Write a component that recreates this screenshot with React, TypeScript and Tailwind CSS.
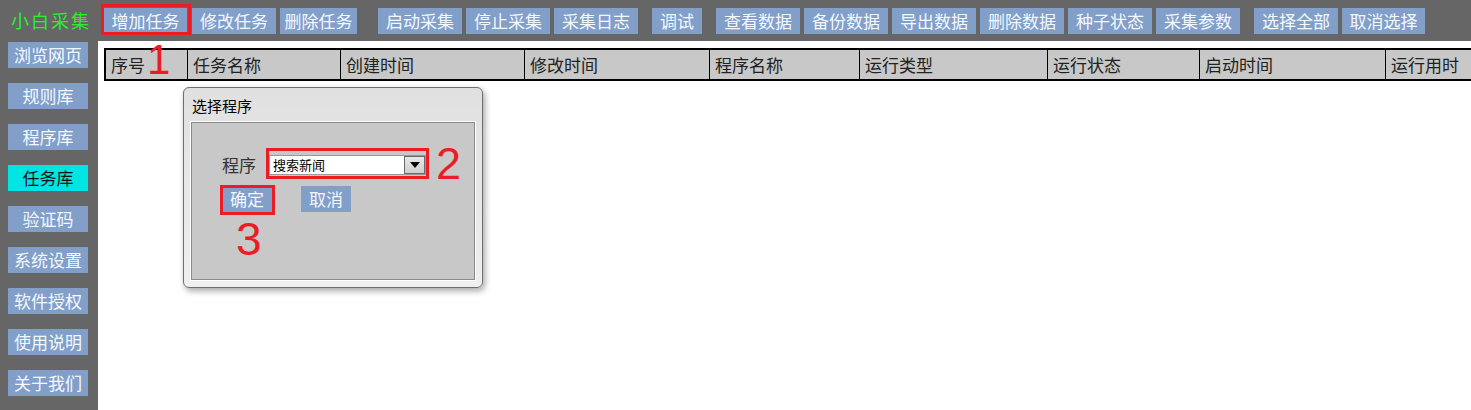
import React from 'react';

const topButtons = [
  { label: '增加任务', cls: 'w-[83px] ml-0' },
  { label: '修改任务', cls: 'w-[84px] ml-[5px]' },
  { label: '删除任务', cls: 'w-[77px] ml-[4px]' },
  { label: '启动采集', cls: 'w-[84px] ml-[21px]' },
  { label: '停止采集', cls: 'w-[84px] ml-[4px]' },
  { label: '采集日志', cls: 'w-[84px] ml-[4px]' },
  { label: '调试', cls: 'w-[50px] ml-[14px]' },
  { label: '查看数据', cls: 'w-[84px] ml-[14px]' },
  { label: '备份数据', cls: 'w-[84px] ml-[4px]' },
  { label: '导出数据', cls: 'w-[84px] ml-[4px]' },
  { label: '删除数据', cls: 'w-[84px] ml-[4px]' },
  { label: '种子状态', cls: 'w-[84px] ml-[4px]' },
  { label: '采集参数', cls: 'w-[84px] ml-[4px]' },
  { label: '选择全部', cls: 'w-[84px] ml-[14px]' },
  { label: '取消选择', cls: 'w-[83px] ml-[4px]' },
];

const sideItems = ['浏览网页', '规则库', '程序库', '任务库', '验证码', '系统设置', '软件授权', '使用说明', '关于我们'];

const columns = [
  { label: '序号', cls: 'w-[82px]' },
  { label: '任务名称', cls: 'w-[153px]' },
  { label: '创建时间', cls: 'w-[184px]' },
  { label: '修改时间', cls: 'w-[185px]' },
  { label: '程序名称', cls: 'w-[150px]' },
  { label: '运行类型', cls: 'w-[188px]' },
  { label: '运行状态', cls: 'w-[152px]' },
  { label: '启动时间', cls: 'w-[186px]' },
  { label: '运行用时', cls: 'w-[200px]' },
];

const Mark: React.FC<{ n: string; cls: string }> = ({ n, cls }) => (
  <span
    className={
      "absolute z-20 leading-none text-[#ed1c24] font-['Liberation_Sans',Arial,sans-serif] " + cls
    }
  >
    {n}
  </span>
);

export default function App() {
  return (
    <div className="relative w-[1471px] h-[410px] overflow-hidden bg-[#666666] flex flex-col font-['Noto_Sans_CJK_SC','Noto_Sans',sans-serif]">
      {/* top toolbar */}
      <div className="flex h-[41px] shrink-0">
        <div className="w-[98px] shrink-0 pl-[11px] pt-[7px] text-[18px] leading-[26px] tracking-[2px] text-[#2aee2a]">
          小白采集
        </div>
        <div className="flex pt-[8px] pl-[6px]">
          {topButtons.map((b, i) => (
            <div
              key={b.label}
              className={
                'relative h-[26px] shrink-0 bg-[#819fc9] text-[17px] leading-[26px] text-center text-[#f4f8ff] ' + b.cls
              }
            >
              {b.label}
              {i === 0 && (
                <div className="absolute left-[-3px] right-[-4px] top-[-4px] bottom-[-1px] border-[3px] border-[#ed1c24]" />
              )}
            </div>
          ))}
        </div>
      </div>

      <div className="flex flex-1">
        {/* left menu */}
        <div className="w-[98px] shrink-0 flex flex-col gap-[15px] pt-[1px] pl-[8px]">
          {sideItems.map((s) => (
            <div
              key={s}
              className={
                s === '任务库'
                  ? 'w-[80px] h-[26px] bg-[#00e4e4] text-[#111] text-[17px] leading-[26px] text-center'
                  : 'w-[80px] h-[26px] bg-[#819fc9] text-[#f4f8ff] text-[17px] leading-[26px] text-center'
              }
            >
              {s}
            </div>
          ))}
        </div>

        {/* content */}
        <div className="flex-1 bg-white pl-[6px] pt-[7px] overflow-hidden">
          <div className="flex w-max h-[33px] bg-[#c8c8c8] border-y-2 border-l-2 border-black">
            {columns.map((c) => (
              <div
                key={c.label}
                className={'flex items-center pl-[5px] border-r border-black text-[17px] text-[#222] ' + c.cls}
              >
                {c.label}
              </div>
            ))}
          </div>
        </div>
      </div>

      {/* dialog */}
      <div className="absolute left-[183px] top-[87px] w-[300px] h-[201px] z-10 rounded-[6px] border border-[#6e6e6e] bg-gradient-to-b from-[#e0e0e0] to-[#efefef] shadow-[2px_3px_6px_rgba(0,0,0,0.35)] flex flex-col px-[7px] pb-[7px]">
        <div className="h-[34px] pl-[1px] pt-[8px] text-[15px] leading-[20px] text-black">选择程序</div>
        <div className="relative flex-1 bg-[#c8c8c8] border border-[#8a8a8a] shadow-[0_0_0_1px_#ffffff]">
          <div className="flex items-center pt-[32px] pl-[30px]">
            <span className="text-[17px] leading-[20px] text-[#333] w-[47px]">程序</span>
            <div className="relative flex w-[157px] h-[20px] bg-white border border-[#9a9a9a]">
              <span className="flex-1 pl-[3px] text-[13px] leading-[18px] text-black">搜索新闻</span>
              <div className="w-[21px] h-full bg-gradient-to-b from-[#e8e8e8] to-[#cfcfcf] border border-[#6a6a6a] flex items-center justify-center">
                <svg width="10" height="6" viewBox="0 0 10 6">
                  <path d="M0 0 L10 0 L5 6 Z" fill="#000" />
                </svg>
              </div>
              <div className="absolute left-[-4px] right-[-4px] top-[-8px] bottom-[-5px] border-[3px] border-[#ed1c24]" />
            </div>
          </div>
          <div className="flex pt-[11px] pl-[30px] gap-[29px]">
            <div className="relative w-[50px] h-[26px] bg-[#819fc9] text-[17px] leading-[26px] text-center text-[#f4f8ff]">
              确定
              <div className="absolute left-[-2px] right-[-3px] top-[-1px] bottom-[-3px] border-[3px] border-[#ed1c24]" />
            </div>
            <div className="w-[50px] h-[26px] bg-[#819fc9] text-[17px] leading-[26px] text-center text-[#f4f8ff]">取消</div>
          </div>
        </div>
      </div>

      <Mark n="1" cls="left-[147px] top-[39px] text-[42px]" />
      <Mark n="2" cls="left-[436px] top-[141px] text-[45px]" />
      <Mark n="3" cls="left-[236px] top-[216px] text-[46px]" />
    </div>
  );
}
